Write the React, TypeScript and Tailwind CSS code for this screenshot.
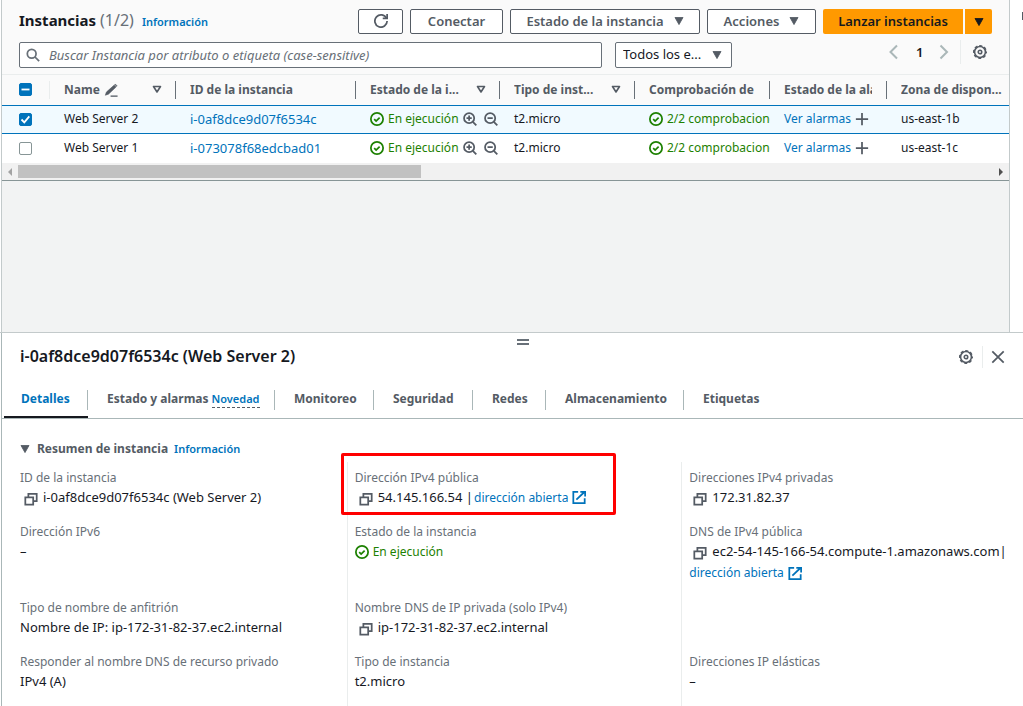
import { type ReactNode } from 'react';

type IconProps = { className?: string };

function Stroke({ className = '', width = 2, children }: { className?: string; width?: number; children: ReactNode }) {
  return (
    <svg viewBox="0 0 16 16" fill="none" stroke="currentColor" strokeWidth={width} aria-hidden="true" className={`shrink-0 ${className}`}>
      {children}
    </svg>
  );
}

const Refresh = ({ className }: IconProps) => (
  <Stroke className={className}>
    <path d="M10 5h5V0" />
    <path d="M15 8a7 7 0 1 1-.7-3" />
  </Stroke>
);

const CaretFilled = ({ className }: IconProps) => (
  <svg viewBox="0 0 10 9" aria-hidden="true" className={`h-[8px] w-[10px] shrink-0 ${className ?? ''}`}>
    <path d="M.5.5h9L5 8.5z" fill="currentColor" stroke="currentColor" strokeLinejoin="round" />
  </svg>
);

const CaretOutline = () => (
  <svg viewBox="0 0 10 9" aria-hidden="true" className="h-[9px] w-[10px] shrink-0">
    <path d="M1.5 1.5h7L5 7z" fill="none" stroke="currentColor" strokeWidth="1.6" strokeLinejoin="round" />
  </svg>
);

const Search = ({ className }: IconProps) => (
  <Stroke className={className}>
    <circle cx="6.5" cy="6.5" r="5" />
    <path d="m10 10 5 5" />
  </Stroke>
);

const Chevron = ({ right = false }: { right?: boolean }) => (
  <Stroke width={2} className="size-4">
    <path d={right ? 'm4.5 1.5 6.5 6.5-6.5 6.5' : 'M11 1.5 4.5 8l6.5 6.5'} />
  </Stroke>
);

const Gear = () => (
  <Stroke width={1.8} className="size-[14px]">
    <circle cx="8" cy="8" r="6.2" />
    <circle cx="8" cy="8" r="7.2" strokeWidth="1.6" strokeDasharray="3.4 2.255" strokeDashoffset="1.7" />
    <circle cx="8" cy="8" r="2" />
  </Stroke>
);

const Check = () => (
  <Stroke className="size-[14px]">
    <circle cx="8" cy="8" r="7" />
    <path d="m4.8 8.1 2.2 2.2 4-4" />
  </Stroke>
);

const Zoom = ({ plus = false }: { plus?: boolean }) => (
  <Stroke className="size-[14px]">
    <circle cx="7" cy="7" r="5.8" />
    <path d={plus ? 'M4 7h6M7 4v6' : 'M4 7h6'} />
    <path d="m11.2 11.2 4 4" />
  </Stroke>
);

const Plus = () => (
  <Stroke width={2} className="size-[14px]">
    <path d="M8 1v14M1 8h14" />
  </Stroke>
);

const Pencil = () => (
  <Stroke width={1.5} className="size-[14px]">
    <path d="M7.500 15h8" />
    <path d="m1.500 14 1.200-3.600L11.600 2.400l2.200 2.200-8.700 8.200z" fill="currentColor" strokeWidth=".6" />
    <path d="m12.200 1.800.7-.7 2.200 2.200-.7.7z" fill="currentColor" strokeWidth=".5" />
  </Stroke>
);

const Copy = () => (
  <Stroke width={2} className="size-[14px]">
    <path d="M1.500 6h9v8.500h-9z" />
    <path d="M5 6V2h9.500v8.500h-4" />
  </Stroke>
);

const External = () => (
  <Stroke className="size-[14px]">
    <path d="M9.500 2H15v5.500M5 11l9.500-9" />
    <path d="M14.500 9.500V15H1.500V2H7" />
  </Stroke>
);

const Close = () => (
  <Stroke className="size-[14px]">
    <path d="m1.500 1.500 13 13M14.500 1.500l-13 13" />
  </Stroke>
);

const buttonBase = 'flex h-[25px] items-center justify-center rounded-[2px] border border-[#545b64] bg-white pb-[2px] font-semibold text-[#545b64]';

function Divider({ light = false }: { light?: boolean }) {
  return <span className={light ? 'h-[18px] w-px shrink-0 bg-[#eaeded]' : 'h-[18px] w-px shrink-0 bg-[#687078]'} />;
}

function HeadCell({ label, sort = false, edit = false, last = false }: { label: string; sort?: boolean; edit?: boolean; last?: boolean }) {
  return (
    <th scope="col" className="p-0 text-left text-[12px] font-bold text-[#545b64]">
      <div className="flex h-[30px] items-center pb-px pl-[14px]">
        <span className={edit ? 'whitespace-nowrap' : 'min-w-0 flex-1 overflow-hidden whitespace-nowrap'}>{label}</span>
        {edit && (
          <button type="button" aria-label="Editar nombre" className="ml-1 flex-1">
            <Pencil />
          </button>
        )}
        {sort && (
          <button type="button" aria-label={`Ordenar por ${label}`} className="mr-[13px]">
            <CaretOutline />
          </button>
        )}
        {!sort && !last && <span className="w-[14px] shrink-0" />}
        {!last && <Divider />}
      </div>
    </th>
  );
}

function Row({ name, id, zone, selected = false }: { name: string; id: string; zone: string; selected?: boolean }) {
  const cell = selected
    ? 'h-[29px] overflow-hidden whitespace-nowrap border-y border-[#0073bb] bg-[#f1faff] pt-0 pr-0 pb-px pl-[14px]'
    : 'h-[29px] overflow-hidden whitespace-nowrap bg-white pt-0 pr-0 pb-px pl-[14px]';
  return (
    <tr>
      <td className={cell}>
        <Tick label={`Seleccionar ${name}`} checked={selected} />
      </td>
      <td className={cell}>{name}</td>
      <td className={cell}>
        <a href="#instancia" className="block text-[13px] leading-[18px] text-[#0073bb]">{id}</a>
      </td>
      <td className={cell}>
        <div className="flex items-center gap-1 text-[#1d8102]">
          <Check />
          <span>En ejecución</span>
          <span className="flex gap-[7px] text-[#545b64]">
            <button type="button" aria-label="Incluir en el filtro"><Zoom plus /></button>
            <button type="button" aria-label="Excluir del filtro"><Zoom /></button>
          </span>
        </div>
      </td>
      <td className={cell}>t2.micro</td>
      <td className={cell}>
        <div className="flex items-center gap-1 overflow-hidden text-[#1d8102]">
          <Check />
          <span className="min-w-0 overflow-hidden">2/2 comprobaciones</span>
        </div>
      </td>
      <td className={cell}>
        <div className="flex items-center gap-1">
          <a href="#alarmas" className="text-[#0073bb]">Ver alarmas</a>
          <button type="button" aria-label="Crear alarma" className="text-[#545b64]"><Plus /></button>
        </div>
      </td>
      <td className={cell}>{zone}</td>
    </tr>
  );
}

function Tick({ label, checked = false, mixed = false }: { label: string; checked?: boolean; mixed?: boolean }) {
  return (
    <label className="relative ml-[3px] block size-[13px]">
      <input
        type="checkbox"
        aria-label={label}
        defaultChecked={checked || mixed}
        className="peer block size-[13px] appearance-none rounded-[2px] border border-[#879596] bg-white checked:border-[#0073bb] checked:bg-[#0073bb]"
      />
      <svg viewBox="0 0 13 13" aria-hidden="true" className="pointer-events-none absolute inset-0 hidden size-[13px] text-white peer-checked:block">
        <path d={mixed ? 'M2.500 6.500h8' : 'm2.500 6.500 2.800 2.900 5-6'} fill="none" stroke="currentColor" strokeWidth="1.8" />
      </svg>
    </label>
  );
}

function InstancePanel() {
  return (
    <div className="flex h-[332px] bg-white">
      <section className="ml-px flex min-w-0 flex-1 flex-col border-x border-[#c3cacb] bg-[#f2f3f3]">
        <div className="border-b border-[#eaeded] bg-[#fafafa] pt-[9px] pr-[17px] pb-[5px] pl-[17px]">
          <div className="flex h-[25px] items-center justify-between">
            <div className="flex items-baseline pb-[2px]">
              <h1 className="text-[15px] leading-5 font-bold text-[#16191f]">
                Instancias <span className="text-[16px] font-normal text-[#687078]">(1/2)</span>
              </h1>
              <a href="#info" className="ml-2 text-[11px] font-semibold text-[#0073bb]">Información</a>
            </div>
            <div className="flex gap-[7px]">
              <button type="button" aria-label="Actualizar" className={`${buttonBase} w-[45px]`}>
                <Refresh className="size-[14px]" />
              </button>
              <button type="button" className={`${buttonBase} w-[93px]`}>Conectar</button>
              <button type="button" className={`${buttonBase} w-[190px] gap-[10px]`}>
                Estado de la instancia <CaretFilled />
              </button>
              <button type="button" className={`${buttonBase} w-[109px] gap-[10px]`}>
                Acciones <CaretFilled />
              </button>
              <div className="flex gap-[2px] text-[#16191f]">
                <button type="button" className="h-[25px] w-[140px] rounded-l-[2px] bg-[#ff9900] pb-[2px] font-semibold">Lanzar instancias</button>
                <button type="button" aria-label="Más opciones de lanzamiento" className="flex h-[25px] w-[27px] items-center justify-center rounded-r-[2px] bg-[#ff9900]">
                  <CaretFilled />
                </button>
              </div>
            </div>
          </div>
          <div className="mt-[6px] flex h-[29px] items-center">
            <label className="flex h-[26px] flex-1 items-center rounded-[2px] border border-[#687078] bg-white pl-[6px] text-[#687078]">
              <Search className="size-[14px]" />
              <input
                type="search"
                aria-label="Buscar instancia"
                placeholder="Buscar Instancia por atributo o etiqueta (case-sensitive)"
                className="ml-[9px] min-w-0 flex-1 outline-none placeholder:text-[#687078] placeholder:italic"
              />
            </label>
            <div className="relative ml-[13px] h-[26px] w-[117px]">
              <select aria-label="Filtrar por estado" className="h-full w-full appearance-none rounded-[2px] border border-[#687078] bg-white pb-[2px] pl-[7px] text-[#16191f]">
                <option>Todos los e...</option>
              </select>
              <span className="pointer-events-none absolute inset-y-0 right-[10px] flex items-center text-[#545b64]"><CaretFilled /></span>
            </div>
            <nav aria-label="Paginación" className="ml-[154px] flex h-[24px] items-center self-start text-[#aab7b8]">
              <button type="button" aria-label="Página anterior"><Chevron /></button>
              <button type="button" className="mx-[14px] w-[6px] font-semibold text-[#16191f]">1</button>
              <button type="button" aria-label="Página siguiente"><Chevron right /></button>
              <span className="mr-[12px] ml-[8px] h-6 w-px bg-[#eaeded]" />
              <button type="button" aria-label="Preferencias" className="mr-[5px] text-[#545b64]"><Gear /></button>
            </nav>
          </div>
        </div>
        <table className="w-full table-fixed border-separate border-spacing-0 bg-[#fafafa] text-[12px] leading-5 text-[#16191f]">
          <colgroup>
            <col className="w-[48px]" />
            <col className="w-[126px]" />
            <col className="w-[180px]" />
            <col className="w-[144px]" />
            <col className="w-[135px]" />
            <col className="w-[135px]" />
            <col className="w-[117px]" />
            <col />
          </colgroup>
          <thead>
            <tr>
              <th scope="col" className="p-0">
                <div className="flex h-[30px] items-center justify-between pb-px pl-[14px]">
                  <Tick label="Seleccionar todo" mixed />
                  <Divider light />
                </div>
              </th>
              <HeadCell label="Name" edit sort />
              <HeadCell label="ID de la instancia" />
              <HeadCell label="Estado de la i..." sort />
              <HeadCell label="Tipo de inst..." sort />
              <HeadCell label="Comprobación de" />
              <HeadCell label="Estado de la alarma" />
              <HeadCell label="Zona de dispon..." last />
            </tr>
          </thead>
          <tbody>
            <Row name="Web Server 2" id="i-0af8dce9d07f6534c" zone="us-east-1b" selected />
            <Row name="Web Server 1" id="i-073078f68edcbad01" zone="us-east-1c" />
          </tbody>
        </table>
        <div className="flex h-[18px] items-center border-b border-[#879596] bg-[#f1f1f1]">
          <span className="flex w-4 justify-center text-[#a3a3a3]">
            <svg viewBox="0 0 4 8" aria-hidden="true" className="h-2 w-1"><path d="M4 0v8L0 4z" fill="currentColor" /></svg>
          </span>
          <span className="h-[13px] w-[403px] bg-[#c1c1c1]" />
          <span className="ml-auto flex w-4 justify-center text-[#505050]">
            <svg viewBox="0 0 4 8" aria-hidden="true" className="h-2 w-1"><path d="M0 0v8l4-4z" fill="currentColor" /></svg>
          </span>
        </div>
      </section>
      <aside className="flex w-[13px] justify-end pt-3">
        <span className="h-2 w-px bg-[#545b64]" />
      </aside>
    </div>
  );
}

const tabs = [
  { label: 'Estado y alarmas', width: 'w-[187px]', isNew: true },
  { label: 'Monitoreo', width: 'w-[99px]' },
  { label: 'Seguridad', width: 'w-[99px]' },
  { label: 'Redes', width: 'w-[73px]' },
  { label: 'Almacenamiento', width: 'w-[138px]' },
];

function Field({ label, children, first = false, mark = false }: { label?: string; children?: ReactNode; first?: boolean; mark?: boolean }) {
  return (
    <div className={first ? 'border-l border-transparent pt-[6px] pb-[9px] pl-[7px]' : 'relative border-l border-[#eaeded] pt-[6px] pb-[9px] pl-[7px]'}>
      {label && <div className="h-[19px] text-[12px] leading-5 text-[#687078]">{label}</div>}
      <div className="text-[#16191f]">{children}</div>
      {mark && <span className="pointer-events-none absolute -top-[9px] -left-[7px] h-[62px] w-[275px] rounded-[2px] border-[3px] border-[#ff0000]" />}
    </div>
  );
}

function Copyable({ children }: { children: ReactNode }) {
  return (
    <div className="flex items-center gap-[5px] pl-[4px] whitespace-nowrap">
      <button type="button" aria-label="Copiar" className="pt-[3px] text-[#545b64]"><Copy /></button>
      <span>{children}</span>
    </div>
  );
}

function OpenLink() {
  return (
    <a href="#abrir" className="inline-flex items-center gap-1 text-[12px] leading-[21px] text-[#0073bb]">
      dirección abierta <External />
    </a>
  );
}

function DetailPanel() {
  return (
    <section className="flex flex-1 flex-col border-t border-[#c3cacb] bg-white">
      <div className="ml-px flex flex-1 flex-col border-l border-[#aab7b8]">
        <div className="flex h-[18px] flex-col items-center justify-center gap-[2px] pl-[21px]">
          <span className="h-[2px] w-3 bg-[#687078]" />
          <span className="h-[2px] w-3 bg-[#687078]" />
        </div>
        <header className="flex h-6 items-start justify-between pr-[18px] pl-[18px]">
          <h2 className="-mt-[5px] text-[16px] leading-5 font-semibold text-[#16191f]">i-0af8dce9d07f6534c (Web Server 2)</h2>
          <div className="-mt-[5px] flex items-center text-[#545b64]">
            <button type="button" aria-label="Preferencias del panel"><Gear /></button>
            <span className="mr-[8px] ml-[9px] h-[22px] w-px bg-[#eaeded]" />
            <button type="button" aria-label="Cerrar"><Close /></button>
          </div>
        </header>
        <div role="tablist" className="mt-[6px] flex h-[38px] border-b border-[#aab7b8] pl-[2px] text-[12px] leading-5 font-bold text-[#545b64]">
          <button type="button" role="tab" aria-selected="true" className="relative flex w-[84px] items-start justify-between pt-[9px] pl-[17px] text-[#0073bb]">
            <span className="-mt-px">Detalles</span>
            <span className="h-5 w-px bg-[#aab7b8]" />
            <span className="absolute inset-x-0 bottom-0 h-[2px] bg-[#16191f]" />
          </button>
          {tabs.map((tab) => (
            <button key={tab.label} type="button" role="tab" aria-selected="false" className={`flex items-start justify-between pt-[9px] pl-[19px] whitespace-nowrap ${tab.width}`}>
              <span className="-mt-px flex items-baseline gap-[3px]">
                {tab.label}
                {tab.isNew && <span className="border-b border-dashed border-[#545b64] text-[11px] leading-[17px] font-semibold text-[#0073bb]">Novedad</span>}
              </span>
              <span className="h-5 w-px bg-[#aab7b8]" />
            </button>
          ))}
          <button type="button" role="tab" aria-selected="false" className="flex items-start pt-[8px] pl-[19px]">Etiquetas</button>
        </div>
        <div className="mt-[20px] flex h-[23px] items-baseline pl-[18px]">
          <button type="button" aria-expanded="true" className="flex items-center gap-[7px] text-[12px] leading-5 font-bold text-[#545b64]">
            <CaretFilled /> Resumen de instancia
          </button>
          <a href="#info-resumen" className="ml-[6px] text-[11px] font-semibold text-[#0073bb]">Información</a>
        </div>
        <div className="mr-[7px] ml-[10px] grid flex-1 grid-cols-3 grid-rows-[auto_auto_auto_1fr]">
          <Field label="ID de la instancia" first><Copyable>i-0af8dce9d07f6534c (Web Server 2)</Copyable></Field>
          <Field label="Dirección IPv4 pública" mark>
            <Copyable><span className="flex h-5 gap-px">54.145.166.54 | <OpenLink /></span></Copyable>
          </Field>
          <Field label="Direcciones IPv4 privadas"><Copyable>172.31.82.37</Copyable></Field>
          <Field label="Dirección IPv6" first>–</Field>
          <Field label="Estado de la instancia">
            <div className="flex items-center gap-1 text-[12px] leading-[21px] text-[#1d8102]"><Check /> En ejecución</div>
          </Field>
          <Field label="DNS de IPv4 pública">
            <Copyable>ec2-54-145-166-54.compute-1.amazonaws.com|</Copyable>
            <div className="flex h-[22px] items-end"><OpenLink /></div>
          </Field>
          <Field label="Tipo de nombre de anfitrión" first>Nombre de IP: ip-172-31-82-37.ec2.internal</Field>
          <Field label="Nombre DNS de IP privada (solo IPv4)"><Copyable>ip-172-31-82-37.ec2.internal</Copyable></Field>
          <Field />
          <Field label="Responder al nombre DNS de recurso privado" first>IPv4 (A)</Field>
          <Field label="Tipo de instancia">t2.micro</Field>
          <Field label="Direcciones IP elásticas">–</Field>
        </div>
      </div>
    </section>
  );
}

export default function App() {
  return (
    <main className="flex min-h-screen flex-col bg-white font-['Noto_Sans','Open_Sans',sans-serif] text-[13px] leading-5">
      <InstancePanel />
      <DetailPanel />
    </main>
  );
}
